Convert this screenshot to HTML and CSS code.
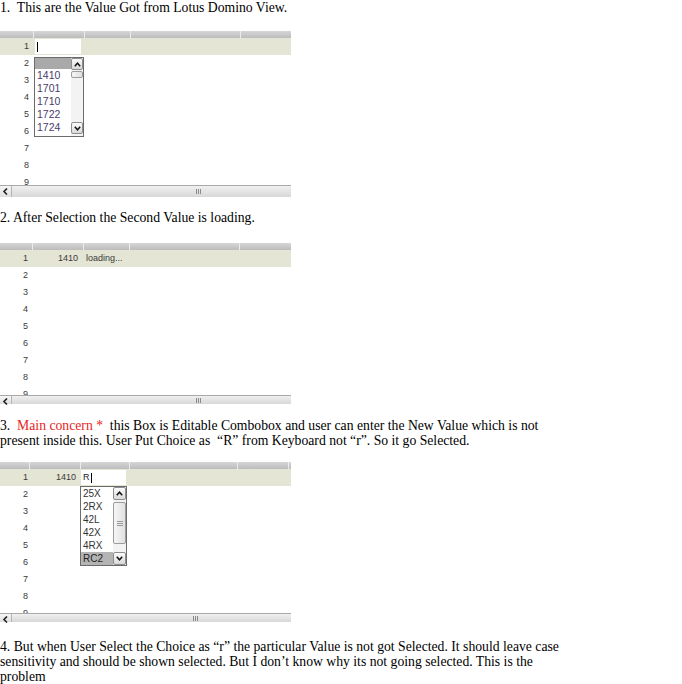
FILE: index.html
```html
<!DOCTYPE html>
<html>
<head>
<meta charset="utf-8">
<link rel="stylesheet" href="styles.css">
</head>
<body>
<p class="txt">1.&nbsp; This are the Value Got from Lotus Domino View.</p>

<div class="grid g1">
  <div class="ghead"><span class="hc w34"></span><span class="hc w51"></span><span class="hc w46"></span><span class="hc w110"></span><span class="hc rest"></span></div>
  <div class="gbody b1">
    <div class="row sel"><span class="num">1</span><span class="inp i1"><span class="caret"></span></span></div>
    <div class="row"><span class="num">2</span></div>
    <div class="row"><span class="num">3</span></div>
    <div class="row"><span class="num">4</span></div>
    <div class="row"><span class="num">5</span></div>
    <div class="row"><span class="num">6</span></div>
    <div class="row"><span class="num">7</span></div>
    <div class="row"><span class="num">8</span></div>
    <div class="row"><span class="num">9</span></div>
  </div>
  <div class="hscroll s1">
    <span class="harrow"><svg width="7" height="7" viewBox="0 0 7 7"><polyline points="5,0.5 2,3.5 5,6.5" fill="none" stroke="#222" stroke-width="1.6"/></svg></span>
    <span class="grip"></span>
  </div>
  <div class="dd dd1">
    <div class="dd-list">
      <div class="dd-item hl first"></div>
      <div class="dd-item">1410</div>
      <div class="dd-item">1701</div>
      <div class="dd-item">1710</div>
      <div class="dd-item">1722</div>
      <div class="dd-item">1724</div>
      <div class="dd-item">1730</div>
    </div>
    <div class="dd-sb">
      <span class="sb-btn"><svg width="7" height="5" viewBox="0 0 7 5"><polyline points="0.8,4.2 3.5,1.2 6.2,4.2" fill="none" stroke="#111" stroke-width="1.5"/></svg></span>
      <span class="sb-thumb small"></span>
      <span class="sb-space"></span>
      <span class="sb-btn"><svg width="7" height="5" viewBox="0 0 7 5"><polyline points="0.8,0.8 3.5,3.8 6.2,0.8" fill="none" stroke="#111" stroke-width="1.5"/></svg></span>
    </div>
  </div>
</div>

<p class="txt t2">2. After Selection the Second Value is loading.</p>

<div class="grid g2">
  <div class="ghead"><span class="hc w33"></span><span class="hc w51"></span><span class="hc w46"></span><span class="hc w110"></span><span class="hc rest"></span></div>
  <div class="gbody b2">
    <div class="row sel"><span class="num n2">1</span><span class="val v2">1410</span><span class="load">loading...</span></div>
    <div class="row"><span class="num n2">2</span></div>
    <div class="row"><span class="num n2">3</span></div>
    <div class="row"><span class="num n2">4</span></div>
    <div class="row"><span class="num n2">5</span></div>
    <div class="row"><span class="num n2">6</span></div>
    <div class="row"><span class="num n2">7</span></div>
    <div class="row"><span class="num n2">8</span></div>
    <div class="row"><span class="num n2">9</span></div>
  </div>
  <div class="hscroll s2">
    <span class="harrow"><svg width="7" height="7" viewBox="0 0 7 7"><polyline points="5,0.5 2,3.5 5,6.5" fill="none" stroke="#222" stroke-width="1.6"/></svg></span>
    <span class="grip"></span>
  </div>
</div>

<p class="txt t3">3.&nbsp; <span class="red">Main concern *</span>&nbsp;&nbsp;this Box is Editable Combobox and user can enter the New Value which is not<br>present inside this. User Put Choice as&nbsp; “R” from Keyboard not “r”. So it go Selected.</p>

<div class="grid g3">
  <div class="ghead"><span class="hc w30"></span><span class="hc w51"></span><span class="hc w49"></span><span class="hc w108"></span><span class="hc w51"></span><span class="hc rest"></span></div>
  <div class="gbody b3">
    <div class="row sel"><span class="num n2">1</span><span class="val v3">1410</span><span class="inp i3">R<span class="caret"></span></span></div>
    <div class="row"><span class="num n2">2</span></div>
    <div class="row"><span class="num n2">3</span></div>
    <div class="row"><span class="num n2">4</span></div>
    <div class="row"><span class="num n2">5</span></div>
    <div class="row"><span class="num n2">6</span></div>
    <div class="row"><span class="num n2">7</span></div>
    <div class="row"><span class="num n2">8</span></div>
    <div class="row"><span class="num n2">9</span></div>
  </div>
  <div class="hscroll s2">
    <span class="harrow"><svg width="7" height="7" viewBox="0 0 7 7"><polyline points="5,0.5 2,3.5 5,6.5" fill="none" stroke="#222" stroke-width="1.6"/></svg></span>
    <span class="grip g3grip"></span>
  </div>
  <div class="dd dd3">
    <div class="dd-list">
      <div class="dd-item">25X</div>
      <div class="dd-item">2RX</div>
      <div class="dd-item">42L</div>
      <div class="dd-item">42X</div>
      <div class="dd-item">4RX</div>
      <div class="dd-item hl">RC2</div>
    </div>
    <div class="dd-sb sb3">
      <span class="sb-btn b13"><svg width="7" height="5" viewBox="0 0 7 5"><polyline points="0.8,4.2 3.5,1.2 6.2,4.2" fill="none" stroke="#111" stroke-width="1.5"/></svg></span>
      <span class="sb-thumb big"><span class="lines"></span></span>
      <span class="sb-space"></span>
      <span class="sb-btn b13"><svg width="7" height="5" viewBox="0 0 7 5"><polyline points="0.8,0.8 3.5,3.8 6.2,0.8" fill="none" stroke="#111" stroke-width="1.5"/></svg></span>
    </div>
  </div>
</div>

<p class="txt t4">4. But when User Select the Choice as “r” the particular Value is not got Selected. It should leave case<br>sensitivity and should be shown selected. But I don’t know why its not going selected. This is the<br>problem</p>
</body>
</html>
```

FILE: styles.css
```css
html, body {
  margin: 0;
  padding: 0;
  background: #ffffff;
}
body {
  font-family: "Liberation Serif", "Times New Roman", serif;
  font-size: 13.7px;
  line-height: 15px;
  color: #000;
}
.txt {
  margin: 0;
  white-space: nowrap;
}
.t2 { margin-top: 13px; }
.t3 { margin-top: 14px; }
.t4 { margin-top: 17px; }
.red { color: #e8231e; }

.grid {
  position: relative;
  width: 291px;
  font-family: "Liberation Sans", Arial, sans-serif;
  font-size: 9px;
  line-height: 11px;
  color: #3a3a3a;
}
.g1 { margin-top: 16px; }
.g2 { margin-top: 18px; }
.g3 { margin-top: 14px; }

.ghead {
  display: flex;
  height: 7px;
  background: linear-gradient(#d6d6d6, #bcbcbc);
}
.hc {
  box-sizing: border-box;
  height: 100%;
  border-right: 1px solid #ececec;
  flex: none;
}
.hc.rest { flex: 1; border-right: none; }
.w30 { width: 30px; }
.w33 { width: 33px; }
.w34 { width: 34px; }
.w46 { width: 46px; }
.w49 { width: 49px; }
.w51 { width: 51px; }
.w108 { width: 108px; }
.w110 { width: 110px; }

.gbody { overflow: hidden; }
.b1 { height: 147px; }
.b2 { height: 145px; }
.b3 { height: 144px; }

.row {
  display: flex;
  align-items: center;
  height: 17px;
  flex: none;
}
.row.sel { background: #e4e5d4; }
.num {
  width: 29px;
  text-align: right;
  flex: none;
}
.num.n2 { width: 28px; }
.val {
  text-align: right;
  flex: none;
}
.v2 { width: 50px; }
.v3 { width: 48px; }
.load { margin-left: 8px; }

.inp {
  display: flex;
  align-items: center;
  height: 15px;
  background: #ffffff;
  box-sizing: border-box;
  flex: none;
  color: #222;
}
.i1 { width: 46px; margin-left: 6px; padding-left: 2px; }
.i3 { width: 45px; margin-left: 5px; padding-left: 2px; }
.caret {
  display: inline-block;
  width: 1px;
  height: 10px;
  background: #000;
}
.i3 .caret { margin-left: 1px; }

.hscroll {
  display: flex;
  align-items: center;
  box-sizing: border-box;
  border-top: 1px solid #a9a9a9;
  background: linear-gradient(#f0f0f0, #d8d8d8);
}
.s1 { height: 12px; }
.s2 { height: 9px; align-items: flex-start; }
.harrow {
  box-sizing: border-box;
  width: 12px;
  height: 100%;
  border-right: 1px solid #b5b5b5;
  display: flex;
  align-items: center;
  justify-content: center;
  background: linear-gradient(#f7f7f7, #dedede);
}
.s2 .harrow { align-items: flex-start; padding-top: 2px; }
.grip {
  margin-left: 184px;
  width: 5px;
  height: 5px;
  background: repeating-linear-gradient(90deg, #8a8a8a 0 1px, transparent 1px 2px);
}
.s2 .grip { margin-top: 2px; }
.g3grip { margin-left: 181px; }

.dd {
  position: absolute;
  box-sizing: border-box;
  display: flex;
  background: #ffffff;
  border: 1px solid #6b6b6b;
  overflow: hidden;
  color: #4a3c6c;
}
.dd1 { left: 34px; top: 26px; width: 50px; height: 80px; font-size: 10.5px; }
.dd3 { left: 80px; top: 24px; width: 47px; height: 80px; color: #333; font-size: 10px; }
.dd-list { flex: 1; overflow: hidden; }
.dd-item {
  height: 13px;
  line-height: 13px;
  padding-left: 2px;
  white-space: nowrap;
}
.dd-item.first { height: 11px; }
.dd-item.hl { background: #a9a9a9; }
.dd3 .dd-item.hl { background: #b4b4b4; color: #222; }

.dd-sb {
  width: 12px;
  flex: none;
  display: flex;
  flex-direction: column;
  background: #f3f3f3;
  padding-bottom: 2px;
  box-sizing: border-box;
}
.sb3 { width: 13px; padding-bottom: 0; }
.sb-btn {
  box-sizing: border-box;
  height: 12px;
  flex: none;
  display: flex;
  align-items: center;
  justify-content: center;
  border: 1px solid #8e8e8e;
  border-radius: 2px;
  background: linear-gradient(#fbfbfb, #d9d9d9);
}
.sb-btn.b13 { height: 13px; }
.sb-thumb {
  box-sizing: border-box;
  flex: none;
  margin-top: 1px;
  border: 1px solid #9c9c9c;
  border-radius: 2px;
  background: linear-gradient(90deg, #f6f6f6, #e0e0e0);
  display: flex;
  align-items: center;
  justify-content: center;
}
.sb-thumb.small { height: 7px; }
.sb-thumb.big { height: 42px; margin-top: 2px; }
.lines {
  width: 6px;
  height: 5px;
  background: repeating-linear-gradient(180deg, #9a9a9a 0 1px, transparent 1px 2px);
}
.sb-space { flex: 1; }
```
